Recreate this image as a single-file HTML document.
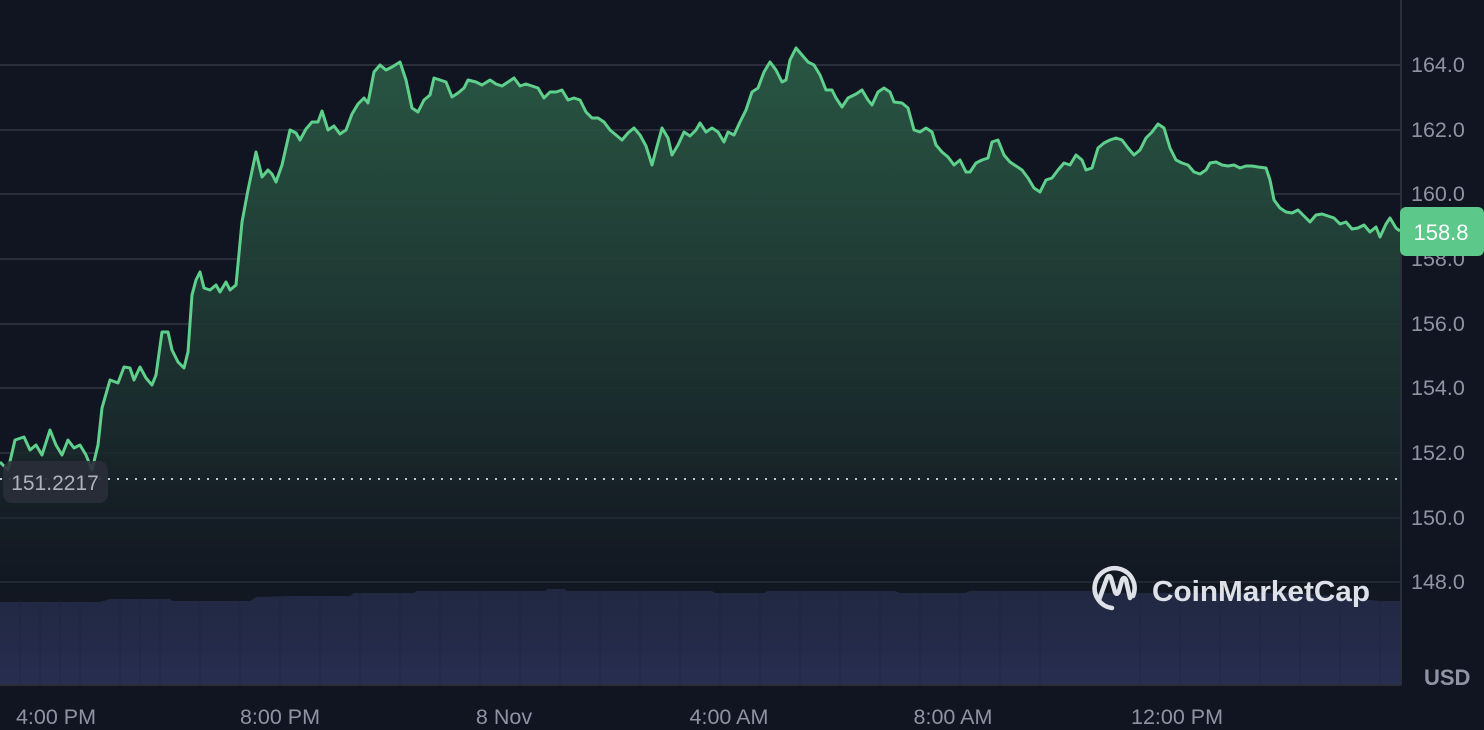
<!DOCTYPE html>
<html><head><meta charset="utf-8"><style>
html,body{margin:0;padding:0;background:#111521;width:1484px;height:730px;overflow:hidden}
svg text{font-family:"Liberation Sans",sans-serif}
</style></head><body>
<svg width="1484" height="730" viewBox="0 0 1484 730" xmlns="http://www.w3.org/2000/svg">
<defs>
<linearGradient id="g" x1="0" y1="0" x2="0" y2="1">
<stop offset="0" stop-color="#2a5a45" stop-opacity="0.95"/>
<stop offset="0.6" stop-color="#1a2b2c" stop-opacity="0.9"/>
<stop offset="1" stop-color="#111521" stop-opacity="0"/>
</linearGradient>
</defs>
<rect width="1484" height="730" fill="#111521"/>
<g stroke="#2a2e3a" stroke-width="2">
<line x1="0" y1="65" x2="1400" y2="65"/><line x1="0" y1="130" x2="1400" y2="130"/>
<line x1="0" y1="194" x2="1400" y2="194"/><line x1="0" y1="259" x2="1400" y2="259"/>
<line x1="0" y1="324" x2="1400" y2="324"/><line x1="0" y1="388" x2="1400" y2="388"/>
<line x1="0" y1="453" x2="1400" y2="453"/><line x1="0" y1="518" x2="1400" y2="518"/>
<line x1="0" y1="582" x2="1400" y2="582"/>
</g>
<polygon fill="#272e50" points="0,602 100,602 110,599 170,599 172,601 250,601 256,597 290,596 350,596 354,593 414,593 416,591 545,591 547,589 565,589 567,591 712,591 715,593 765,593 767,591 895,591 900,593 965,593 970,591 1090,591 1100,593 1300,593 1380,601 1400,601 1400,685 0,685"/>
<g stroke="#1f2540" stroke-width="1" opacity="0.6">
<path d="M20 600V685M40 600V685M60 600V685M80 600V685M120 598V685M140 598V685M160 598V685M200 600V685M240 600V685M280 596V685M320 596V685M360 593V685M400 593V685M440 591V685M480 591V685M520 591V685M560 590V685M600 591V685M640 591V685M680 591V685M720 593V685M760 593V685M800 591V685M840 591V685M880 591V685M920 593V685M960 593V685M1000 591V685M1040 591V685M1140 593V685M1180 593V685M1220 593V685M1260 593V685M1300 593V685M1340 597V685M1380 601V685"/>
</g>
<polygon id="area" fill="url(#g)" points=""/>
<polyline id="ln" fill="none" stroke="#5fd08c" stroke-width="3" stroke-linejoin="round" points=""/>
<line x1="0" y1="479" x2="1398" y2="479" stroke="#c0c4d0" stroke-width="2" stroke-dasharray="2,7"/>
<rect x="3" y="461" width="105" height="42" rx="9" fill="#2a2d38" opacity="0.9"/>
<text x="55" y="490" font-size="21" fill="#aeb2bf" text-anchor="middle">151.2217</text>
<line x1="1401" y1="0" x2="1401" y2="685" stroke="#2a2e3a" stroke-width="2"/>
<line x1="0" y1="685" x2="1401" y2="685" stroke="#2a2e3a" stroke-width="2"/>
<g font-size="21.5" fill="#8f94a5">
<text x="1411" y="72">164.0</text><text x="1411" y="137">162.0</text>
<text x="1411" y="201">160.0</text><text x="1411" y="266">158.0</text>
<text x="1411" y="331">156.0</text><text x="1411" y="395">154.0</text>
<text x="1411" y="460">152.0</text><text x="1411" y="525">150.0</text>
<text x="1411" y="589">148.0</text>
<text x="1424" y="685" font-weight="bold" font-size="22" fill="#8f94a5">USD</text>
</g>
<rect x="1400" y="207" width="84" height="49" rx="6" fill="#5cc88a"/>
<text x="1441" y="240" font-size="22" fill="#ffffff" text-anchor="middle">158.8</text>
<g font-size="21.5" fill="#8f94a5" text-anchor="middle">
<text x="56" y="724">4:00 PM</text><text x="280" y="724">8:00 PM</text>
<text x="504" y="724">8 Nov</text><text x="729" y="724">4:00 AM</text>
<text x="953" y="724">8:00 AM</text><text x="1177" y="724">12:00 PM</text>
</g>
<g fill="none" stroke="#dfe1e8" stroke-width="4.5" stroke-linecap="round" stroke-linejoin="round">
<path d="M1133 596A20 20 0 1 0 1112 608"/>
<path d="M1099 600L1107 578Q1109 574 1111 578L1115 592Q1117 596 1119 591L1122 580Q1124 576 1126 580L1130 598"/>
</g>
<text x="1152" y="601" font-size="29" font-weight="bold" fill="#dfe1e8" textLength="218" lengthAdjust="spacingAndGlyphs">CoinMarketCap</text>
</svg>
<script>
var p=[[0,462],[8,470],[15,440],[24,437],[30,450],[36,445],[42,455],[50,430],[56,445],[62,455],[68,440],[74,448],[80,445],[86,455],[92,470],[98,445],[102,408],[110,380],[118,383],[124,367],[130,368],[134,380],[140,367],[146,378],[152,385],[156,375],[162,332],[168,332],[172,350],[178,362],[184,368],[188,352],[192,295],[196,280],[200,272],[204,288],[210,290],[216,285],[220,292],[226,282],[230,290],[236,285],[242,222],[248,190],[256,152],[262,177],[268,170],[272,174],[276,182],[282,165],[290,130],[296,133],[300,140],[306,129],[312,122],[318,122],[322,111],[328,130],[334,126],[340,134],[346,130],[352,114],[358,104],[364,98],[368,103],[374,72],[380,65],[386,70],[392,67],[400,62],[406,80],[412,108],[418,112],[424,100],[430,95],[434,78],[440,80],[446,82],[452,97],[458,93],[464,88],[468,80],[476,82],[482,85],[490,80],[496,84],[502,86],[508,82],[514,78],[520,86],[526,84],[532,86],[538,88],[544,98],[550,92],[556,92],[562,90],[568,100],[574,98],[580,100],[586,112],[592,118],[598,118],[604,122],[610,130],[616,135],[622,140],[628,133],[634,128],[640,135],[646,146],[652,165],[656,150],[662,128],[668,138],[672,155],[678,145],[684,132],[690,136],[696,130],[700,123],[706,132],[712,128],[718,132],[724,142],[728,132],[734,135],[740,122],[746,110],[752,92],[758,88],[764,72],[770,62],[776,70],[782,82],[786,80],[790,60],[796,48],[802,55],[808,62],[814,65],[820,75],[826,90],[832,90],[836,98],[842,107],[848,98],[856,94],[862,90],[868,100],[872,105],[878,92],[884,88],[890,92],[894,102],[902,103],[908,108],[914,130],[920,132],[926,128],[932,132],[936,145],[942,152],[948,157],[954,165],[960,160],[966,172],[970,172],[976,163],[982,160],[988,158],[992,142],[998,140],[1004,155],[1010,162],[1016,166],[1022,170],[1028,178],[1034,188],[1040,192],[1046,180],[1052,178],[1058,170],[1064,163],[1070,165],[1076,155],[1082,160],[1086,170],[1092,168],[1098,148],[1104,143],[1110,140],[1116,138],[1122,140],[1128,148],[1134,155],[1140,150],[1146,138],[1152,132],[1158,124],[1164,128],[1170,148],[1176,160],[1182,163],[1188,165],[1194,172],[1200,174],[1206,170],[1210,163],[1216,162],[1222,165],[1228,166],[1234,165],[1240,168],[1246,166],[1252,166],[1258,167],[1266,168],[1270,180],[1274,200],[1280,208],[1286,212],[1292,213],[1298,210],[1304,216],[1310,222],[1316,215],[1322,214],[1328,216],[1334,218],[1340,224],[1346,222],[1352,229],[1358,228],[1364,225],[1370,232],[1376,227],[1380,237],[1386,224],[1390,218],[1396,228],[1400,231]];
var s=p.map(function(a){return a.join(',')}).join(' ');
document.getElementById('ln').setAttribute('points',s);
document.getElementById('area').setAttribute('points',s+' 1400,685 0,685');
</script>
</body></html>
